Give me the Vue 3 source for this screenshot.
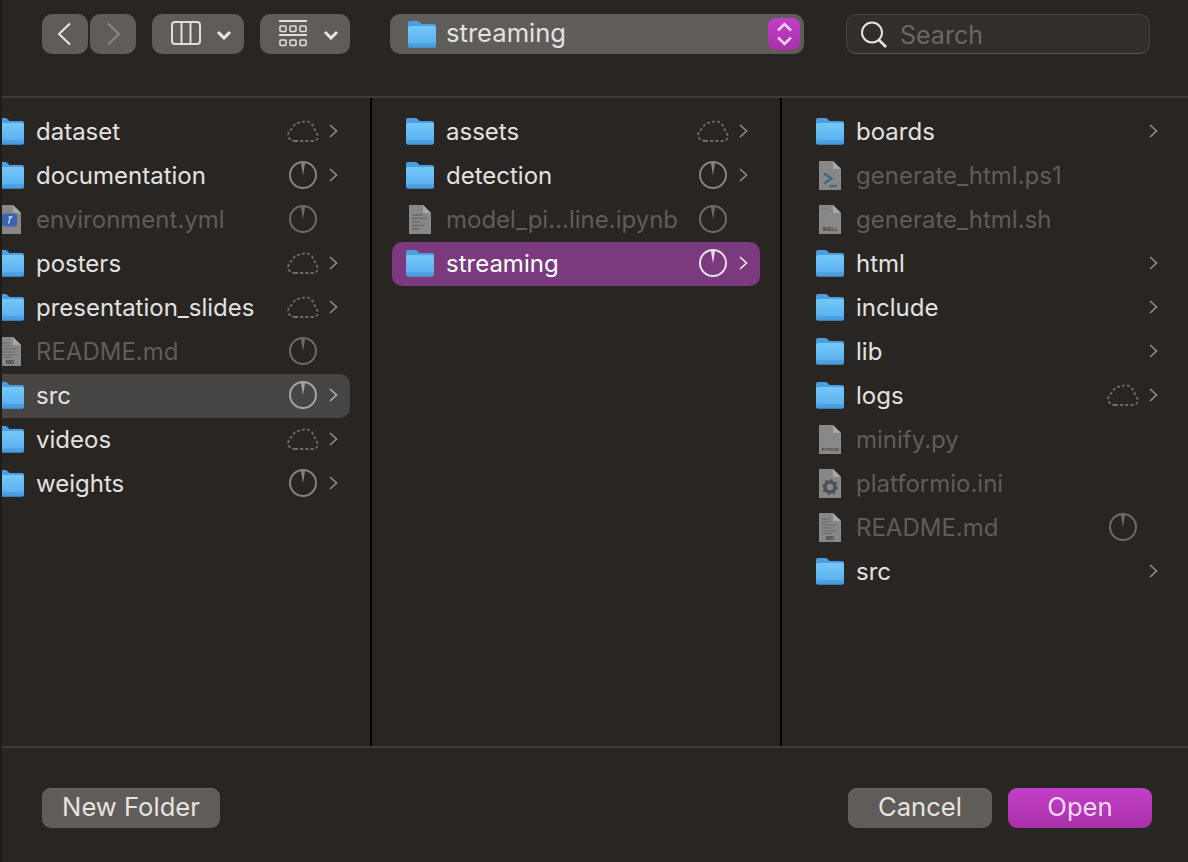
<script setup>
const columns = [
  {
    name: 'first',
    rows: [
      { label: 'dataset', icon: 'folder', status: 'cloud', more: true },
      { label: 'documentation', icon: 'folder', status: 'clock', more: true },
      { label: 'environment.yml', icon: 'yml', status: 'clock', dim: true },
      { label: 'posters', icon: 'folder', status: 'cloud', more: true },
      { label: 'presentation_slides', icon: 'folder', status: 'cloud', more: true },
      { label: 'README.md', icon: 'md', status: 'clock', dim: true },
      { label: 'src', icon: 'folder', status: 'clock', more: true, sel: 'grey' },
      { label: 'videos', icon: 'folder', status: 'cloud', more: true },
      { label: 'weights', icon: 'folder', status: 'clock', more: true }
    ]
  },
  {
    name: 'second',
    rows: [
      { label: 'assets', icon: 'folder', status: 'cloud', more: true },
      { label: 'detection', icon: 'folder', status: 'clock', more: true },
      { label: 'model_pi...line.ipynb', icon: 'doc', status: 'clock', dim: true },
      { label: 'streaming', icon: 'folder', status: 'clock', more: true, sel: 'accent' }
    ]
  },
  {
    name: 'third',
    rows: [
      { label: 'boards', icon: 'folder', more: true },
      { label: 'generate_html.ps1', icon: 'ps', dim: true },
      { label: 'generate_html.sh', icon: 'shell', dim: true },
      { label: 'html', icon: 'folder', more: true },
      { label: 'include', icon: 'folder', more: true },
      { label: 'lib', icon: 'folder', more: true },
      { label: 'logs', icon: 'folder', status: 'cloud', more: true },
      { label: 'minify.py', icon: 'python', dim: true },
      { label: 'platformio.ini', icon: 'gear', dim: true },
      { label: 'README.md', icon: 'md', status: 'clock', dim: true },
      { label: 'src', icon: 'folder', more: true }
    ]
  }
]
</script>

<template>
  <div class="dialog">
    <svg class="defs" aria-hidden="true">
      <defs>
        <linearGradient id="folderFront" x1="0" y1="0" x2="0" y2="1">
          <stop offset="0" stop-color="#74c8f9" />
          <stop offset="1" stop-color="#55acec" />
        </linearGradient>
        <symbol id="folder" viewBox="0 0 28 27">
          <path d="M2 0H9C10.2 0 11 .5 12 1.5L13.5 3H26a2 2 0 0 1 2 2V10H0V2a2 2 0 0 1 2-2Z" fill="#4b9fe0" />
          <rect y="5" width="28" height="21.5" rx="2" fill="url(#folderFront)" />
          <path d="M0 22.5H28V24.5a2 2 0 0 1-2 2H2a2 2 0 0 1-2-2Z" fill="#4699dc" />
          <path d="M0 24H28" stroke="#5aaee8" stroke-width=".6" />
        </symbol>
        <symbol id="clock" viewBox="0 0 28 28">
          <circle cx="14" cy="14" r="13" fill="none" stroke="currentColor" stroke-width="2" />
          <path d="M11.8 1H16.2L14 14.5Z" fill="currentColor" />
        </symbol>
        <symbol id="cloud" viewBox="0 0 32 22">
          <path d="M8 21H26C30 21 32 17 30 14L26 6C24 1 17 0 13 3C10 2 7 4 6 8C2 10 0 14 2 18C3 20 5 21 8 21Z" fill="none" stroke="currentColor" stroke-width="1.8" stroke-dasharray="3 2.2" />
        </symbol>
        <symbol id="sheet" viewBox="0 0 22 29">
          <path d="M0 0H14L22 8V29H0Z" fill="#8e8e8e" />
          <path d="M14 0L22 8H14Z" fill="#b0b0b0" />
        </symbol>
      </defs>
    </svg>

    <header class="toolbar">
      <div class="nav">
        <button class="tool nav-btn" aria-label="Back">
          <svg class="back" width="14" height="24" viewBox="0 0 14 24"><path d="M13 1.5 2 12l11 10.5" fill="none" stroke="#e9e7e5" stroke-width="2" /></svg>
        </button>
        <button class="tool nav-btn" aria-label="Forward">
          <svg class="forward" width="14" height="24" viewBox="0 0 14 24"><path d="M1 1.5 12 12 1 22.5" fill="none" stroke="#8b8987" stroke-width="2" /></svg>
        </button>
      </div>
      <button class="tool view-btn" aria-label="View">
        <svg class="columns-glyph" width="30" height="24" viewBox="0 0 30 24" fill="none" stroke="#e0dedc" stroke-width="2">
          <rect x="1" y="1" width="28" height="22" rx="3" />
          <path d="M10.5 1V23M19.5 1V23" />
        </svg>
        <svg class="caret" width="16" height="10" viewBox="0 0 16 10"><path d="M2 2l6 6 6-6" fill="none" stroke="#e9e7e5" stroke-width="3" /></svg>
      </button>
      <button class="tool group-btn" aria-label="Group">
        <svg width="28" height="28" viewBox="0 0 28 28" fill="none" stroke="#e0dedc" stroke-width="1.6">
          <path d="M0 1H28M0 15H28" stroke-width="2" />
          <rect x="1" y="6" width="6" height="5.5" rx="1" />
          <rect x="11" y="6" width="6" height="5.5" rx="1" />
          <rect x="21" y="6" width="6" height="5.5" rx="1" />
          <rect x="1" y="20" width="6" height="5.5" rx="1" />
          <rect x="11" y="20" width="6" height="5.5" rx="1" />
          <rect x="21" y="20" width="6" height="5.5" rx="1" />
        </svg>
        <svg class="caret" width="16" height="10" viewBox="0 0 16 10"><path d="M2 2l6 6 6-6" fill="none" stroke="#e9e7e5" stroke-width="3" /></svg>
      </button>
      <div class="path">
        <svg class="folder path-folder"><use href="#folder" /></svg>
        <span class="path-name">streaming</span>
        <span class="stepper">
          <svg width="17" height="26" viewBox="0 0 17 26" fill="none" stroke="#f4cdf4" stroke-width="2.6">
            <path d="M2 9.5l6.5-6.5 6.5 6.5M2 16.5l6.5 6.5 6.5-6.5" />
          </svg>
        </span>
      </div>
      <div class="search">
        <svg width="28" height="28" viewBox="0 0 28 28" fill="none" stroke="#e6e4e2" stroke-width="2">
          <circle cx="12" cy="11.5" r="10" />
          <path d="M19 19l7 7" stroke-width="2.6" />
        </svg>
        <span class="search-text">Search</span>
      </div>
    </header>

    <main class="browser">
      <section v-for="col in columns" :key="col.name" class="column" :class="col.name">
        <div
          v-for="row in col.rows"
          :key="row.label"
          class="row"
          :class="{ dim: row.dim, grey: row.sel === 'grey', accent: row.sel === 'accent' }"
        >
          <span class="icon">
            <svg v-if="row.icon === 'folder'" class="folder"><use href="#folder" /></svg>
            <svg v-else class="sheet" viewBox="0 0 22 29">
              <use href="#sheet" width="22" height="29" />
              <g v-if="row.icon === 'yml'">
                <rect x="3" y="8.5" width="15" height="13" rx="2" fill="#3b68b4" />
                <path d="M9.5 18.5 11.5 12M9.5 12h4" stroke="#cfe0f5" stroke-width="1.4" fill="none" />
              </g>
              <g v-else-if="row.icon === 'doc'" stroke="#6e6e6e" stroke-width="1.3">
                <path d="M3 10H14M3 13.5H18M3 17H11M3 20.5H16M3 24H10" />
              </g>
              <g v-else-if="row.icon === 'ps'" fill="none" stroke="#3f6d8c" stroke-width="2.4">
                <path d="M5 12.5l7.5 5-7.5 5" />
                <path d="M10.5 25H18" />
              </g>
              <g v-else-if="row.icon === 'shell'">
                <path d="M2.5 4H9" stroke="#7c7c7c" stroke-width="1" />
                <text x="11" y="25.5" class="tag shell">SHELL</text>
              </g>
              <g v-else-if="row.icon === 'python'">
                <path d="M2.5 4H9" stroke="#7c7c7c" stroke-width="1" />
                <text x="11" y="25.5" class="tag">PYTHON</text>
              </g>
              <g v-else-if="row.icon === 'gear'">
                <circle cx="11" cy="18" r="5" fill="none" stroke="#4f5358" stroke-width="3.6" />
                <circle cx="11" cy="18" r="7" fill="none" stroke="#4f5358" stroke-width="2" stroke-dasharray="2.4 3.1" />
              </g>
              <g v-else-if="row.icon === 'md'">
                <path d="M3 6H11M3 9H12M3 12H18M3 15H16M3 18H18M3 20.5H13" stroke="#6c6c6c" stroke-width="1" />
                <text x="11" y="27" class="tag md">MD</text>
              </g>
            </svg>
          </span>
          <span class="label">{{ row.label }}</span>
          <span class="status">
            <svg v-if="row.status === 'clock'" class="clock"><use href="#clock" /></svg>
            <svg v-else-if="row.status === 'cloud'" class="cloud"><use href="#cloud" /></svg>
          </span>
          <span class="more">
            <svg v-if="row.more" width="9" height="14" viewBox="0 0 9 14"><path d="M1 1l6.5 6L1 13" fill="none" stroke="currentColor" stroke-width="1.7" /></svg>
          </span>
        </div>
      </section>
    </main>

    <footer class="footer">
      <button class="btn new-folder">New Folder</button>
      <div class="actions">
        <button class="btn cancel">Cancel</button>
        <button class="btn open">Open</button>
      </div>
    </footer>
  </div>
</template>

<style>
html, body { background: #1f1d1b; }
</style>

<style scoped>
.dialog {
  box-sizing: border-box;
  width: 1186px;
  height: 862px;
  margin-left: 2px;
  background: #282522;
  color: #e4e2e0;
  font-family: Inter, "Liberation Sans", sans-serif;
  font-size: 24px;
  display: flex;
  flex-direction: column;
  overflow: hidden;
}
.defs { display: block; width: 0; height: 0; }
button { font: inherit; color: inherit; border: 0; padding: 0; }

.toolbar {
  box-sizing: border-box;
  height: 98px;
  flex: none;
  display: flex;
  align-items: flex-start;
  padding: 14px 0 0 40px;
  border-bottom: 2px solid #3e3b38;
}
.nav { display: flex; gap: 2px; }
.tool {
  height: 40px;
  background: #5f5c59;
  border-radius: 10px;
  display: flex;
  align-items: center;
}
.nav-btn { width: 46px; justify-content: center; }
.back { margin-right: 3px; margin-top: -1px; }
.forward { margin-left: 1px; margin-top: -1px; }
.view-btn { width: 92px; margin-left: 16px; padding-left: 19px; box-sizing: border-box; }
.group-btn { width: 90px; margin-left: 16px; padding-left: 19px; box-sizing: border-box; }
.columns-glyph { margin-top: -2px; }
.view-btn .caret { margin-left: 15px; margin-top: 1px; }
.group-btn .caret { margin-left: 16px; margin-top: 1px; }

.path {
  box-sizing: border-box;
  width: 414px;
  height: 40px;
  margin-left: 40px;
  background: #5f5c59;
  border-radius: 10px;
  display: flex;
  align-items: center;
  padding: 0 4px 0 18px;
}
.path-folder { margin-right: 10px; }
.path-name { flex: 1; margin-top: -4px; font-size: 25.6px; }
.stepper {
  width: 32px;
  height: 32px;
  border-radius: 8px;
  background: linear-gradient(#c23fc9, #a930a9);
  display: flex;
  align-items: center;
  justify-content: center;
}
.search {
  box-sizing: border-box;
  width: 304px;
  height: 40px;
  margin-left: 42px;
  background: #312e2b;
  border: 1px solid #45423f;
  border-bottom-color: #5a5754;
  border-radius: 10px;
  display: flex;
  align-items: center;
  padding: 0 0 0 13px;
}
.search svg { margin-top: 1px; }
.search-text { color: #6a6866; margin-left: 12px; margin-top: 1px; font-size: 25px; }

.browser {
  flex: 1;
  min-height: 0;
  display: grid;
  grid-template-columns: 368px 408px 1fr;
  column-gap: 2px;
  background: #000;
}
.column {
  background: #282522;
  padding: 12px 20px 0;
  overflow: hidden;
  min-width: 0;
}
.first { padding-left: 0; }
.first .row { margin-left: -20px; }

.row {
  box-sizing: border-box;
  width: 368px;
  height: 44px;
  display: flex;
  align-items: center;
  padding: 0 10px 0 14px;
  border-radius: 10px;
  color: #e4e2e0;
}
.row.dim { color: #5f5d5b; }
.row.grey { background: #474543; }
.row.accent { background: #7b3a7d; color: #fff; }

.icon { width: 28px; height: 29px; flex: none; display: flex; align-items: center; justify-content: center; margin-top: -1px; }
.folder { width: 28px; height: 27px; display: block; flex: none; }
.sheet { width: 22px; height: 29px; display: block; overflow: hidden; opacity: .95; }
.tag { font-family: "Liberation Sans", sans-serif; font-size: 4px; font-weight: 700; fill: #3f3f3f; text-anchor: middle; }
.tag.shell { font-size: 4.8px; }
.tag.md { font-size: 5.5px; }

.label { flex: 1; margin-left: 12px; white-space: nowrap; min-width: 0; margin-top: -1px; }
.status { width: 32px; height: 28px; flex: none; display: flex; align-items: center; justify-content: center; color: #72706e; margin-top: -2px; }
.clock { width: 28px; height: 28px; display: block; color: #858381; }
.cloud { width: 32px; height: 22px; display: block; color: #706e6c; }
.row.dim .clock { color: #6c6a68; }
.row.grey .clock { color: #a6a4a3; }
.row.accent .clock { color: #eadfea; }
.more { width: 14px; height: 14px; margin-left: 7px; flex: none; display: flex; align-items: center; justify-content: center; color: #8d8b89; margin-top: -2px; }
.row.grey .more { color: #b0aeac; }
.row.accent .more { color: #f2e8f2; }

.footer {
  box-sizing: border-box;
  height: 116px;
  flex: none;
  border-top: 2px solid #3e3b38;
  display: flex;
  justify-content: space-between;
  align-items: flex-start;
  padding: 40px 36px 0 40px;
}
.actions { display: flex; gap: 16px; }
.btn {
  height: 40px;
  border-radius: 9px;
  background: #5f5c59;
  color: #e6e4e2;
  box-shadow: inset 0 1px 0 #6b6865;
  font-size: 25.6px;
  padding-bottom: 4px;
  box-sizing: border-box;
}
.new-folder { width: 178px; }
.cancel { width: 144px; }
.open {
  width: 144px;
  background: linear-gradient(#c23fc9, #a930a9);
  color: #f6dcf6;
  box-shadow: none;
}
</style>
